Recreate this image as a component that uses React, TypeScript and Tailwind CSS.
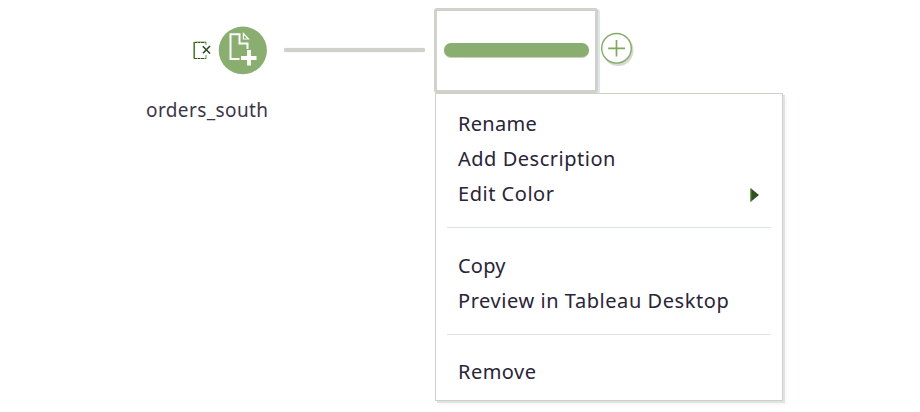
const noto = "font-['Noto_Sans',sans-serif]";

type Item = { label: string; spacing: string; submenu?: boolean };

const groups: { items: Item[]; className: string }[] = [
  {
    className: "pt-[12px] pb-[16px]",
    items: [
      { label: "Rename", spacing: "tracking-[0.3px]" },
      { label: "Add Description", spacing: "tracking-[0.52px]" },
      { label: "Edit Color", spacing: "tracking-[0.52px]", submenu: true },
    ],
  },
  {
    className: "pt-[20px] pb-[16px]",
    items: [
      { label: "Copy", spacing: "tracking-[0.2px]" },
      { label: "Preview in Tableau Desktop", spacing: "tracking-[0.56px]" },
    ],
  },
  {
    className: "pt-[19px]",
    items: [{ label: "Remove", spacing: "tracking-[0.48px]" }],
  },
];

function SheetIcon() {
  return (
    <svg className="mt-[41px] shrink-0" width="20" height="20" viewBox="0 0 20 20" fill="none">
      <path d="M2.5 0.8H14" stroke="#a9c794" />
      <path d="M2 1.5H14M2 17.5H14" stroke="#2e5420" strokeDasharray="3 .5" />
      <path d="M2.2 1V17.5" stroke="#4d7d34" strokeWidth="1.6" />
      <path d="M10.8 5.3L18 12.5M18 5L11 12.3" stroke="#2c4a20" strokeWidth="1.6" />
      <path d="M14 1V4M14 14V17.5" stroke="#6a9a4c" />
    </svg>
  );
}

function InputStepIcon() {
  return (
    <svg className="mt-[26px] shrink-0" width="50" height="50" viewBox="0 0 50 50" fill="none">
      <ellipse cx="24.8" cy="24.4" rx="24.1" ry="23.8" fill="#8aad70" />
      <path d="M21.5 33H12.5V8.2H21.5V17.5H29.5V23" stroke="#fff" strokeWidth="2" />
      <path d="M25.4 7.5V13H30.5Z" stroke="#fff" strokeWidth="1.2" />
      <path d="M31 24V39.5M23 32H38.5" stroke="#fff" strokeWidth="3.8" />
    </svg>
  );
}

function AddStepIcon() {
  return (
    <svg className="mt-[29px] ml-[1px] shrink-0" width="38" height="42" viewBox="0 0 38 42" fill="none">
      <circle cx="19" cy="21.5" r="15.5" fill="#d5d9d5" />
      <circle cx="17.5" cy="19.3" r="14.8" fill="#fff" stroke="#83ab65" strokeWidth="1.4" />
      <path d="M17.5 11V27.5M9.2 19.4H26" stroke="#7eaa60" strokeWidth="1.7" />
    </svg>
  );
}

export default function App() {
  return (
    <main className={`h-[412px] w-[920px] overflow-hidden bg-white text-[#2a2437] ${noto}`}>
      <div className="flex h-[93px] items-start pl-[192px]">
        <SheetIcon />
        <div className="ml-[6px] flex">
          <InputStepIcon />
        </div>
        <div className="mt-[48px] ml-[16px] h-[4px] w-[141px] rounded-full bg-[#d0cfc9] shadow-[0_0_1px_#bccdd0]" />
        <div className="mt-[8px] ml-[9px] flex h-[85px] w-[164px] shrink-0 items-center justify-center rounded-[3px] border-[3px] border-[#d0d1ca] pb-px shadow-[2px_1px_0_#e0e6ea]">
          <div className="h-[14px] w-[145px] rounded-full bg-[#8aad70] shadow-[0_1px_0_#cccec5]" />
        </div>
        <AddStepIcon />
      </div>
      <div className="flex items-start pl-[146px]">
        <div className="mt-[4px] w-[289px] text-[19px] leading-[26px] tracking-[0.4px] text-[#3b3548]">
          orders_south
        </div>
        <div className="h-[308px] w-[348px] border border-[#cfcfc6] bg-white px-[11px] shadow-[2px_2px_0_#dde4e8,4px_4px_1px_#f9f9f5]">
          {groups.map((group, i) => (
            <div
              key={group.items[0].label}
              className={`${group.className} ${i < 2 ? "border-b border-[#d9e3e8]" : ""}`}
            >
              {group.items.map((item) => (
                <div
                  key={item.label}
                  className={`flex h-[35px] items-center justify-between pr-[11px] pl-[11px] text-[20px] whitespace-nowrap ${item.spacing}`}
                >
                  {item.label}
                  {item.submenu && (
                    <svg className="mt-[2px]" width="10" height="14" viewBox="0 0 10 14">
                      <path d="M0.5 0L9 7L0.5 14Z" fill="#315022" />
                      <path d="M0.8 0.5V13.5" stroke="#6a9d46" />
                    </svg>
                  )}
                </div>
              ))}
            </div>
          ))}
        </div>
      </div>
    </main>
  );
}
